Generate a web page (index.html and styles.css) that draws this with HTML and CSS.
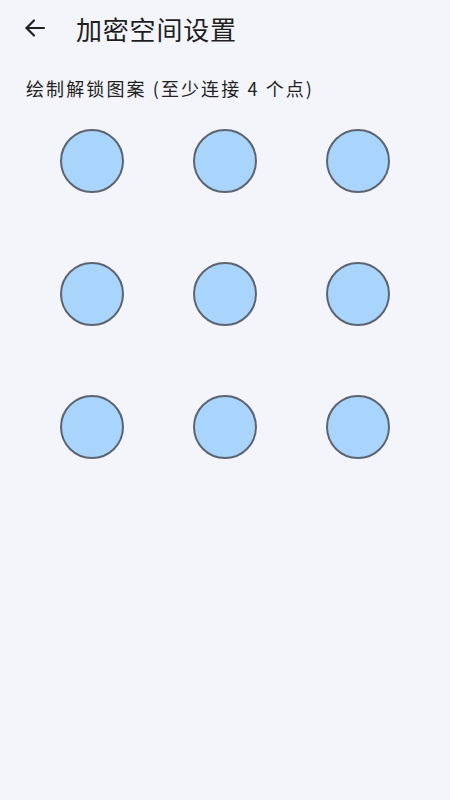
FILE: index.html
```html
<!DOCTYPE html>
<html lang="zh">
<head>
    <meta charset="UTF-8">
    <meta name="viewport" content="width=device-width, initial-scale=1.0">
    <title>加密空间设置</title>
    <link rel="stylesheet" href="styles.css">
</head>
<body>
    <!-- 顶部栏 -->
    <div class="topbar">
        <button class="back">
            <svg width="24" height="24" viewBox="0 0 24 24" fill="none" stroke="#222" stroke-width="2.2" stroke-linecap="round" stroke-linejoin="round">
                <path d="M21 12H3.5"/>
                <path d="M11 4.5L3.5 12l7.5 7.5"/>
            </svg>
        </button>
        <h1>加密空间设置</h1>
    </div>

    <p class="hint">绘制解锁图案 (至少连接 4 个点)</p>

    <!-- 九宫格 -->
    <div class="pattern">
        <div class="cell"><span class="dot"></span></div>
        <div class="cell"><span class="dot"></span></div>
        <div class="cell"><span class="dot"></span></div>
        <div class="cell"><span class="dot"></span></div>
        <div class="cell"><span class="dot"></span></div>
        <div class="cell"><span class="dot"></span></div>
        <div class="cell"><span class="dot"></span></div>
        <div class="cell"><span class="dot"></span></div>
        <div class="cell"><span class="dot"></span></div>
    </div>
</body>
</html>
```

FILE: styles.css
```css
body {
    margin: 0;
    height: 100vh;
    background: #f4f5fa;
    font-family: "Noto Sans CJK SC", "Noto Sans", sans-serif;
    color: #1f1f1f;
}

.topbar {
    display: flex;
    align-items: center;
    height: 56px;
    padding: 0 0 0 21px;
}

.back {
    display: flex;
    align-items: center;
    justify-content: center;
    width: 28px;
    height: 28px;
    padding: 0;
    border: none;
    background: none;
    margin-right: 27px;
}

h1 {
    margin: 0;
    font-size: 26px;
    font-weight: 400;
    letter-spacing: 0.8px;
}

.hint {
    margin: 18px 0 0 26px;
    font-size: 18px;
    line-height: 28px;
    letter-spacing: 2.1px;
    color: #222;
}

.pattern {
    display: grid;
    grid-template-columns: repeat(3, 133px);
    grid-auto-rows: 133px;
    margin: -8px 0 0 25px;
}

.cell {
    display: flex;
    align-items: center;
    justify-content: center;
}

.dot {
    width: 60px;
    height: 60px;
    border-radius: 50%;
    background: #a9d4fc;
    border: 2px solid #5c6470;
}
```
